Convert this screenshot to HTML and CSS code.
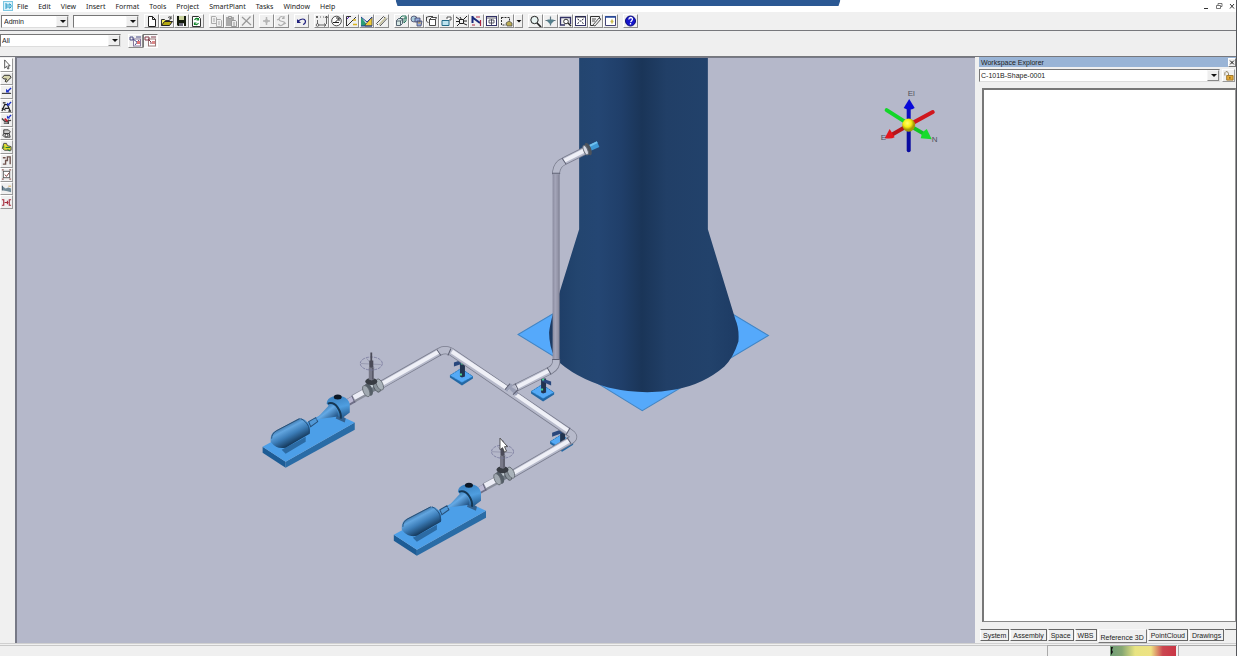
FILE: index.html
```
<!DOCTYPE html>
<html lang="en">
<head>
<meta charset="utf-8">
<title>Smart 3D</title>
<link rel="stylesheet" href="styles.css">
</head>
<body>
<div class="app">
  <div class="session-bar"></div>
  <header class="menubar">
    <svg class="logo" viewBox="0 0 10 10"><rect x=".5" y=".5" width="9" height="9" fill="#d9f1fa" stroke="#7cc7e2"/><path d="M2 3h2v4H2M2 5h2M6 3v4h1l1-1V4L7 3z" fill="none" stroke="#2a9cc8"/></svg>
    <nav class="menus">
      <button>File</button><button>Edit</button><button>View</button><button>Insert</button><button>Format</button><button>Tools</button><button>Project</button><button>SmartPlant</button><button>Tasks</button><button>Window</button><button>Help</button>
    </nav>
    <div class="window-buttons">
      <button aria-label="Minimize"><svg viewBox="0 0 8 8"><path d="M2 6.500h4" stroke="#333"/></svg></button>
      <button aria-label="Restore"><svg viewBox="0 0 8 8"><path d="M3 3V1.500h4v3H6M1.500 3.500h4v3h-4z" fill="none" stroke="#555" stroke-width=".8"/></svg></button>
      <button aria-label="Close"><svg viewBox="0 0 8 8"><path d="M2 2l4 4.500M6 2L2 6.500" stroke="#333"/></svg></button>
    </div>
  </header>

  <div class="toolbar">
    <div class="combos">
      <span class="combo combo-user"><select aria-label="Permission group"><option>Admin</option></select></span>
      <span class="combo combo-blank"><select aria-label="Status"><option></option></select></span>
    </div>
    <div class="group">
      <button aria-label="New"><svg viewBox="0 0 13 12"><path d="M3.500 1.500h4l3 3v7h-7zM7.500 1.500v3h3" fill="#fff" stroke="#222"/></svg></button>
      <button aria-label="Open"><svg viewBox="0 0 13 12"><path d="M1.500 10.500v-6h3l1 1h4v2" fill="#f5ee58" stroke="#333"/><path d="M1.500 10.500l3-4h8l-3 4z" fill="#b5a910" stroke="#222"/><path d="M8 2.500q2-2 3 1M11 1v3H9" fill="none" stroke="#222" stroke-width=".8"/></svg></button>
      <button aria-label="Save"><svg viewBox="0 0 13 12"><path d="M2 1h9v10H3l-1-1z" fill="#141b0c"/><path d="M4 1h5v4H4z" fill="#c8d19b"/><path d="M4 8h5v3H4z" fill="#667"/><path d="M8 8.500h1V11H8z" fill="#fff"/></svg></button>
      <button aria-label="Refresh"><svg viewBox="0 0 13 12"><path d="M2.500 1.500h6l2 2v8h-8z" fill="#fff" stroke="#333"/><path d="M4.500 5q2-3 4-.5M8.500 3v2h-2M8.500 8q-2 3-4 .5M4.500 10V8h2" fill="none" stroke="#12852b" stroke-width="1.200"/></svg></button>
    </div>
    <div class="group">
      <button aria-label="Copy"><svg viewBox="0 0 13 12"><path d="M1.500 1.500h4l1 1v6h-5zM6.500 4.500h4l1 1v6h-5zM3 4h2M3 6h2M8 7h2M8 9h2" fill="none" stroke="#aaa"/></svg></button>
      <button aria-label="Paste"><svg viewBox="0 0 13 12"><path d="M1 2h8v9H1z" fill="#aaa"/><path d="M3.500 1.500h3v2h-3z" fill="#ddd" stroke="#999"/><path d="M6.500 5.500h4l1 1v5h-5zM8 8h2M8 10h2" fill="#eee" stroke="#999"/></svg></button>
      <button aria-label="Delete"><svg viewBox="0 0 13 12"><path d="M2 2l9 8M10.500 1.500L2 10.500" fill="none" stroke="#999" stroke-width="1.200"/></svg></button>
    </div>
    <div class="group">
      <button aria-label="Move"><svg viewBox="0 0 13 12"><path d="M6.500 2v8M3 6h7" fill="none" stroke="#b5b5b5" stroke-width="1.500"/><path d="M6.500 3.500L9 6 6.500 8.500 4 6z" fill="#b5b5b5"/></svg></button>
      <button aria-label="Rotate"><svg viewBox="0 0 13 12"><path d="M9 3Q6 0 4.500 3t3 3.500-1 4Q4 11 3.500 9M9 1v2.500H7M2 5l2-1M9 9l2-1" fill="none" stroke="#b0b0b0" stroke-width="1.200"/></svg></button>
    </div>
    <div class="group">
      <button aria-label="Undo"><svg viewBox="0 0 13 12"><path d="M3 6q6-4 7.500 0Q10.500 9 8 9.500" fill="none" stroke="#22227e" stroke-width="1.200"/><path d="M2 4v4h4z" fill="#22227e"/></svg></button>
    </div>
    <div class="group">
      <button aria-label="Pinpoint"><svg viewBox="0 0 13 12"><path d="M1 1l2 2M3 1L1 3M5 2h1M8 2h1M11.500 1v8M10 3l1.500-2L13 3M2.500 5v5h8M9 8.500l2 1.500-2 1.500" fill="none" stroke="#444" stroke-width=".8"/><circle cx="2.500" cy="10" r="1.300" fill="#fff" stroke="#333" stroke-width=".7"/></svg></button>
      <button aria-label="Point along"><svg viewBox="0 0 13 12"><circle cx="6.500" cy="6" r="4.800" fill="#fff" stroke="#222" stroke-width=".8"/><path d="M3 7.500h6M5 7.500l4-4M6 3h3v3" fill="none" stroke="#222"/></svg></button>
      <button aria-label="Intelligent pen"><svg viewBox="0 0 13 12"><path d="M1.500 11V1.500H6M2 11l9-9" fill="none" stroke="#333"/><path d="M8 5h3M8 9.500h4" stroke="#d8b21b" stroke-width="1.500"/><path d="M2 4l2-2" stroke="#52b"/></svg></button>
      <button aria-label="Measure"><svg viewBox="0 0 13 12"><path d="M1 2l7 9H1z" fill="#2a9c78"/><path d="M5 10l7-8v9H5z" fill="#f0cc36" stroke="#333" stroke-width=".7"/><path d="M1 2l6 5 5-5M1 11h11" fill="none" stroke="#1d3c91"/></svg></button>
      <button aria-label="Ruler"><svg viewBox="0 0 13 12"><path d="M1.500 8.500l7-7M5 11l7-7.500M1.500 8.500L3 10M8.500 1.500L10 3" fill="none" stroke="#555"/><path d="M4 10l7-7.500" stroke="#c5c09a" stroke-width="1.500"/></svg></button>
    </div>
    <div class="group">
      <button aria-label="Workspace"><svg viewBox="0 0 13 12"><path d="M1.500 5.500l2-2h4v5l-2 2h-4zM5.500 10V6l2-2M1.500 6h4" fill="#d7e8e5" stroke="#345" stroke-width=".8"/><path d="M5 3l2-2h4v5l-2 2M9 8V3h3" fill="none" stroke="#26775d"/></svg></button>
      <button aria-label="View style"><svg viewBox="0 0 13 12"><circle cx="4" cy="4" r="3" fill="#acd" stroke="#446" stroke-width=".8"/><path d="M5 3h5v4H5zM7 6h5l-1 5H7z" fill="#8fa8dc" stroke="#446" stroke-width=".8"/><path d="M8 8h3" stroke="#da4"/></svg></button>
      <button aria-label="Clip volume"><svg viewBox="0 0 13 12"><path d="M4.500 4.500h6v6h-6zM4.500 4.500l2-2h5l-1 2M1 2.500l3-1h4M1.500 2v4l2 2" fill="#fff" stroke="#333" stroke-width=".9"/></svg></button>
      <button aria-label="Volume"><svg viewBox="0 0 13 12"><path d="M2 5.500h7v5H2z" fill="#bde3ef" stroke="#246b88"/><path d="M7 4V2h4v3H9" fill="#fff" stroke="#333" stroke-width=".8"/></svg></button>
      <button aria-label="Rotate view"><svg viewBox="0 0 13 12"><path d="M4.500 4.500h4v4h-4zM1 2l3.500 2.500M12 1L8.500 4.500M2 11l2.500-2.500M12 10L8.500 8.500M5 2l1.500 2.500M1 6.500h3.500M8.500 6H12" fill="none" stroke="#222" stroke-width="1"/></svg></button>
      <button aria-label="Fly"><svg viewBox="0 0 13 12"><path d="M2.500 1v7M2 2l8 6" stroke="#18297c" stroke-width="2"/><path d="M6 2h4M10.500 5v6M2 10h3" stroke="#af2440" stroke-width="1.200"/></svg></button>
      <button aria-label="Named views"><svg viewBox="0 0 13 12"><rect x="1.500" y="1.500" width="10" height="9" fill="#fff" stroke="#336"/><path d="M2 3h9M4 5h5v3H4zM6.500 4v6" fill="none" stroke="#334" stroke-width=".8"/></svg></button>
      <button aria-label="Select fence"><svg viewBox="0 0 13 12"><path d="M1.500 2.500h8v6M1.500 2v8H6" fill="none" stroke="#333" stroke-dasharray="2 1"/><path d="M6 8l3-2 3 2v3H7z" fill="#b9aa52" stroke="#444" stroke-width=".7"/></svg></button>
      <button class="narrow" aria-label="More"><svg viewBox="0 0 8 12"><path d="M1.500 5h5L4 7.500z" fill="#111"/></svg></button>
    </div>
    <div class="group">
      <button aria-label="Zoom"><svg viewBox="0 0 13 12"><circle cx="5.500" cy="5" r="3.700" fill="#e8f4f2" stroke="#222"/><path d="M8 8l4 4" stroke="#222" stroke-width="1.700"/></svg></button>
      <button aria-label="Pan"><svg viewBox="0 0 13 12"><path d="M6.500 1.500v9M1.500 5.500h10" fill="none" stroke="#5e7580" stroke-width="1.200"/><path d="M3.500 4.500h6v2L6.500 9.500l-3-3z" fill="#557f8c"/></svg></button>
      <button aria-label="Zoom area"><svg viewBox="0 0 13 12"><path d="M1 2.500h10.500V9M1.500 2v8H6" fill="none" stroke="#336" stroke-width="1.300"/><circle cx="7" cy="6.500" r="2.300" fill="#fff" stroke="#333"/><path d="M9 8l3 3" stroke="#222" stroke-width="1.400"/></svg></button>
      <button aria-label="Fit"><svg viewBox="0 0 13 12"><rect x="1.500" y="1.500" width="10" height="9" fill="#fff" stroke="#336"/><path d="M3.500 4l1.500 1M9.500 4L8 5M3.500 8.500L5 7.500M9.500 8.500L8 7.500M5.500 6h2M2 2h9" fill="none" stroke="#223"/></svg></button>
      <button aria-label="Refresh view"><svg viewBox="0 0 13 12"><path d="M1.500 1.500h9v4M1.500 1.500v9H5" fill="none" stroke="#333"/><path d="M4 10l6-7 2 1-6 7zM3 4h4M3 6h3" fill="#eee" stroke="#555"/></svg></button>
      <button aria-label="Properties"><svg viewBox="0 0 13 12"><path d="M1.500 1.500h10v9h-10z" fill="#fff" stroke="#447"/><path d="M1 2h11" stroke="#224a9c" stroke-width="1.500"/><path d="M8 4.500v4M6.500 6.500h3" stroke="#c9b94b" stroke-width="1.500"/></svg></button>
    </div>
    <div class="group">
      <button aria-label="Help"><svg viewBox="0 0 13 12"><circle cx="6.500" cy="6" r="5" fill="#1515cc" stroke="#0b0b75"/><path d="M4.800 4.500q.2-2 1.900-2 2 .2 1.700 1.900Q7.800 6 6.500 7M6.500 8v1.500" fill="none" stroke="#fff" stroke-width="1.300"/></svg></button>
    </div>
  </div>

  <div class="filterbar">
    <span class="combo combo-filter"><select aria-label="Locate filter"><option>All</option></select></span>
    <div class="group">
      <button aria-label="Inside filter"><svg viewBox="0 0 13 12"><rect x="4.500" y="4" width="7" height="7" fill="#fff" stroke="#86789c"/><path d="M1 2h3v3H1zM4 4l4 3M7 2h5M6 10l4-5" fill="none" stroke="#4a4a86"/><path d="M8 6h3v3H8z" fill="#d77"/></svg></button>
      <button class="pressed" aria-label="Overlapping filter"><svg viewBox="0 0 13 12"><rect x="4.500" y="4" width="7" height="7" fill="#fff" stroke="#977"/><path d="M1 2h4v3H1zM4 4l3 3M7 2h5M6 8h4" fill="none" stroke="#823b4b"/><path d="M8 6h3v3H8z" fill="#d88"/></svg></button>
    </div>
  </div>

  <main class="workarea">
    <div class="side-tools">
      <button class="chosen" aria-label="Select"><svg viewBox="0 0 12 12"><path d="M4 1v9l2-2 1.500 3 1.300-.7L7.500 7.500H10z" fill="#fff" stroke="#222" stroke-width=".8"/></svg></button>
      <button aria-label="Route pipe"><svg viewBox="0 0 12 12"><path d="M1.500 5l2-2.500h6L11 5 8 7.500 6 10 4.500 9 6 6.500H3z" fill="#d8d6b0" stroke="#222"/></svg></button>
      <button aria-label="Insert split"><svg viewBox="0 0 12 12"><path d="M1 7h10" stroke="#444" stroke-width="1.300"/><path d="M9.500 6H5.500V2z" fill="#1c31c8"/><path d="M7 5l4-4" stroke="#1c31c8" stroke-width="1.500"/></svg></button>
      <button aria-label="Insert component"><svg viewBox="0 0 12 12"><path d="M1 11l3-7h3l3 7M2 2h3M4 8h5M8 11h3M1 8l4 2" fill="none" stroke="#222" stroke-width="1.300"/><path d="M10 5H6.500V1.500z" fill="#1c31c8"/><path d="M8 4l3-3" stroke="#1c31c8" stroke-width="1.500"/></svg></button>
      <button aria-label="Insert tap"><svg viewBox="0 0 12 12"><path d="M1 5l3 3 7-1M3 10h5M8 6v5" fill="none" stroke="#444" stroke-width="1.500"/><path d="M4 5l3 3" stroke="#c4202e" stroke-width="2"/><path d="M10 5H6.500V1.500z" fill="#1c31c8"/><path d="M8 4l3-3" stroke="#1c31c8" stroke-width="1.500"/></svg></button>
      <button aria-label="Spool"><svg viewBox="0 0 12 12"><path d="M3 2h5l2 2-1 2 1 4H4L2 8l1-2zM3 6h6" fill="#ccc" stroke="#333"/><circle cx="6" cy="8" r="1.500" fill="#fff" stroke="#333"/></svg></button>
      <button aria-label="Transfer"><svg viewBox="0 0 12 12"><path d="M3 1.500h3l1 2.500 4 1v4H4L1.500 7z" fill="#e1dc32" stroke="#444"/><path d="M5 6h5M3 4v3M7 8l3 2" stroke="#167a35"/></svg></button>
      <button aria-label="Pipe run"><svg viewBox="0 0 12 12"><path d="M2 10h3V6h2V2h3v8M2 3h3" fill="none" stroke="#70544e" stroke-width="1.500"/></svg></button>
      <button aria-label="Check region"><svg viewBox="0 0 12 12"><rect x="2.500" y="2.500" width="7" height="7" fill="#fff" stroke="#555"/><path d="M1 1h2M9 1h2M1 11h2M9 11h2M4 6l2 2 3-4" fill="none" stroke="#7a302c"/></svg></button>
      <button aria-label="Surface"><svg viewBox="0 0 12 12"><path d="M1 3l4 3 3-1 3 1v4L7 9 1 8z" fill="#748c99"/><path d="M8 3.500h3" stroke="#d3a34b"/><path d="M1.500 3v5" stroke="#456"/></svg></button>
      <button aria-label="Connect"><svg viewBox="0 0 12 12"><path d="M1 3h2v6H1M4 6h4M11 3H9v6h2M7 4v4" fill="none" stroke="#a62a3b" stroke-width="1.200"/></svg></button>
    </div>

    <svg class="scene" viewBox="17 58 958 584" preserveAspectRatio="xMidYMid slice" role="img" aria-label="3D model view">
      <defs>
        <linearGradient id="tower" x1="549" x2="738" y1="0" y2="0" gradientUnits="userSpaceOnUse">
          <stop offset="0" stop-color="#1c3a63"/><stop offset=".15" stop-color="#23456f"/><stop offset=".26" stop-color="#244673"/><stop offset=".38" stop-color="#203f6a"/><stop offset=".49" stop-color="#1a3558"/><stop offset=".62" stop-color="#213f67"/><stop offset=".85" stop-color="#22426b"/><stop offset="1" stop-color="#1d3b64"/>
        </linearGradient>
        <linearGradient id="riser" x1="552" x2="560" y1="0" y2="0" gradientUnits="userSpaceOnUse">
          <stop offset="0" stop-color="#85869a"/><stop offset=".4" stop-color="#a4a5b9"/><stop offset=".75" stop-color="#9293a6"/><stop offset="1" stop-color="#6e7084"/>
        </linearGradient>
        <linearGradient id="motor" x1="286" y1="422" x2="296" y2="441" gradientUnits="userSpaceOnUse">
          <stop offset="0" stop-color="#2a5f91"/><stop offset=".3" stop-color="#62a5df"/><stop offset=".6" stop-color="#3c7db8"/><stop offset="1" stop-color="#163b5f"/>
        </linearGradient>
        <linearGradient id="cone" x1="322" y1="407" x2="332" y2="420" gradientUnits="userSpaceOnUse">
          <stop offset="0" stop-color="#3774a9"/><stop offset=".4" stop-color="#65aae6"/><stop offset="1" stop-color="#225486"/>
        </linearGradient>
        <linearGradient id="casing" x1="340" y1="396" x2="346" y2="418" gradientUnits="userSpaceOnUse">
          <stop offset="0" stop-color="#3d85c4"/><stop offset=".45" stop-color="#4f9ee0"/><stop offset="1" stop-color="#1f5284"/>
        </linearGradient>
        <radialGradient id="ball" cx=".4" cy=".35"><stop offset="0" stop-color="#ffff70"/><stop offset=".6" stop-color="#f7ee14"/><stop offset="1" stop-color="#a49a0a"/></radialGradient>
        <g id="support">
          <path d="M-12 0L-1-7 11 1V3L0 10-12 2z" fill="#2468a4"/>
          <path d="M-12 0L-1-7 11 1 0 7z" fill="#55aaf6" stroke="#287bbd" stroke-width=".8" stroke-dasharray="2 1"/>
          <path d="M-2-13h5V1L0 2l-2-1z" fill="#223450"/>
        </g>
        <g id="pump">
          <path d="M263 446v6l23 15v-6z" fill="#1d5c95"/>
          <path d="M286 461v6l69-38v-7z" fill="#2a6ca6"/>
          <path d="M263 446l66-36 26 12-69 39z" fill="#4c9fe8"/>
          <path d="M282 449l17-9 7-4v5l-20 12z" fill="#2c6ba4"/>
          <path d="M338 413l8 5-1 4-9-4z" fill="#34618e"/>
          <path d="M271 441q-1-8 5-11l23-12q7-1 10 6 2 6 1 9l-24 14q-9 2-15-6z" fill="url(#motor)"/>
          <path d="M272 438q0-5 5-8l23-12" fill="none" stroke="#244463" stroke-width=".8"/>
          <path d="M301 418q5 2 8 8 1 4 0 7" fill="none" stroke="#1d4a76" stroke-width=".9"/>
          <path d="M309 421l7-4 2 4-7 5z" fill="#5199d8" stroke="#275079"/>
          <path d="M327 403q0-5 6-7l10 0q6 2 7 8v8l-8 6-6-4z" fill="url(#casing)"/>
          <path d="M328 403q6-2 10 4 4 6 3 11" fill="none" stroke="#153653" stroke-width="2"/>
          <path d="M316 419l14-15q5 0 7 5 2 4 1 7z" fill="url(#cone)"/>
          <ellipse cx="338" cy="396.500" rx="4" ry="2.500" fill="#0b1725"/>
        </g>
        <g id="valve">
          <path d="M348 402l7-4" stroke="#6f6f87" stroke-width="7"/>
          <path d="M348 401l7-4" stroke="#bbb8d2" stroke-width="5"/>
          <path d="M354 398l11-6" stroke="#8a8e9c" stroke-width="8"/>
          <path d="M354 397l11-6" stroke="#ecedf6" stroke-width="5"/>
          <path d="M352 395l3 7" stroke="#64647a"/>
          <path d="M367 390l12-6" stroke="#737c86" stroke-width="8"/>
          <path d="M367 388l12-6" stroke="#c4ced4" stroke-width="3"/>
          <ellipse cx="369" cy="389" rx="3.500" ry="6.500" transform="rotate(-25 369 389)" fill="#555e67"/>
          <ellipse cx="366.500" cy="390.500" rx="3" ry="6" transform="rotate(-25 366.500 390.500)" fill="#a0a8b0" stroke="#5f666e" stroke-width=".8"/>
          <ellipse cx="377" cy="386" rx="3" ry="6" transform="rotate(-25 377 386)" fill="#89929a" stroke="#4f565e" stroke-width=".8"/>
          <ellipse cx="380" cy="384" rx="3" ry="6" transform="rotate(-25 380 384)" fill="#a9b2b9" stroke="#5f666e" stroke-width=".8"/>
          <ellipse cx="371.500" cy="381" rx="6" ry="3.500" fill="#383c43"/>
          <path d="M369 367h5v12l-2 1-3-1z" fill="#777887"/><path d="M373 367v12" stroke="#4d4d5b"/>
          <ellipse cx="371.500" cy="363" rx="11" ry="6.500" fill="none" stroke="#76779b" stroke-width=".8" stroke-dasharray="3 1"/>
          <path d="M361 363l20 1M367 358l8 10" stroke="#85869f" stroke-width=".6"/>
          <path d="M371.500 352v15" stroke="#4b4b58" stroke-width="1.800"/><path d="M371.500 360v7" stroke="#4b4b58" stroke-width="4"/>
        </g>
      </defs>
      <rect x="-500" y="-500" width="3000" height="2000" fill="#b5b8ca"/>
      <path d="M518 334L643 260 768 335 642 410z" fill="#55a9fb" stroke="#4185c5"/>
      <path d="M579 50H707.500V229L735 319Q739 328 738 341 733 357 724 366 703 384 675 389 643 395 608 387 574 377 555 358 549 346 549 332 550 320 560 290L579 229z" fill="url(#tower)"/>

      <g transform="translate(462 375)"><use href="#support"/><path d="M-8-13l9-3v4l-9 3z" fill="#29477c"/></g>
      <g transform="translate(543 391)"><use href="#support"/><path d="M-1-13l9 3v4l-9-4z" fill="#29477c"/></g>
      <g transform="translate(562 441)"><use href="#support"/><path d="M-10-9l11-4v4l-11 4z" fill="#29477c"/></g>
      <path d="M461 363h2M460 374h2M542 379h2M541 389h2M561 430h2" stroke="#4bd897" stroke-width="2"/>

      <path d="M552.500 172h7v190h-7z" fill="url(#riser)"/>
      <g fill="none" stroke-linejoin="round">
        <g stroke="#7a7d8e" stroke-width="8">
          <path d="M556 174V172Q557 164 564 161L586 150"/>
          <path d="M556 359Q557 366 550 370L512 389"/>
          <path d="M382 384L439 351.500Q445 348 451 351L568 431Q577 436 570 440L513 473"/>
        </g>
        <g stroke="#b7bacb" stroke-width="6.500">
          <path d="M556 174V172Q557 164 564 161L586 150"/>
          <path d="M556 359Q557 366 550 370L512 389"/>
          <path d="M382 384L439 351.500Q445 348 451 351L568 431Q577 436 570 440L513 473"/>
        </g>
        <g stroke="#eff0f7" stroke-width="4">
          <path d="M564 160.500L585 150M549 370L516 387M382 383.500L439 351M452 351L509 389M516 394L568 430M569 440L513 472.500"/>
        </g>
        <path d="M508 386l8 5M506 390l6-6M517 394l-6-6" stroke="#9a9fb5" stroke-width="3"/>
        <path d="M505 389l5-6M513 394l5-5M515 383l3 6M437 349l4 6M451 348l-3 7M547 367l4 7M566 434l4-7M567 437l4 6M562 158l4 6M552 173h8M552 359h8" stroke="#5d6073" stroke-width="1"/>
      </g>
      <path d="M589 148l9-4" stroke="#3f99d6" stroke-width="6"/><path d="M589 146l8-4" stroke="#6fc0ee" stroke-width="2"/>
      <ellipse cx="588" cy="149" rx="3" ry="6.500" transform="rotate(-22 588 149)" fill="#4d535c"/>
      <ellipse cx="585.500" cy="150" rx="2" ry="5" transform="rotate(-22 585.500 150)" fill="#d8dae4" stroke="#666c76"/>

      <use href="#valve"/><use href="#pump"/>
      <g transform="translate(131 88)"><use href="#valve"/><use href="#pump"/></g>

      <g stroke-width="4" fill="none" stroke-linecap="round">
        <path d="M886 110L908 124" stroke="#13d629"/><path d="M932 112L908 125" stroke="#d0171d"/>
        <path d="M908 125V150" stroke="#0a0ba0"/><path d="M908 125V108" stroke="#0b0cc0"/>
        <path d="M908 125L892 134" stroke="#b8151b"/><path d="M908 125L922 133" stroke="#11c524"/>
      </g>
      <path d="M908.500 99L914 108q-5 3-11 0z" fill="#0909d8"/>
      <path d="M884 138l5-9 5 8q-3 2-10 1z" fill="#e4151b"/>
      <path d="M931 139l-11-1q1-6 6-9z" fill="#17dc2c"/>
      <circle cx="908" cy="125" r="6.500" fill="url(#ball)"/>
      <g class="axis-label"><text x="907" y="96">El</text><text x="880" y="140">E</text><text x="931" y="142">N</text></g>
      <path d="M500 437.500v11.500l2.500-2 2 4.500 2-1-2-4.500h3z" fill="#fff" stroke="#333" stroke-width=".8"/>
    </svg>

    <aside class="explorer">
      <div class="panel-title"><span>Workspace Explorer</span><button aria-label="Close panel"><svg viewBox="0 0 8 8"><path d="M1.500 1.500l5 5M6.500 1.500l-5 5" stroke="#111" stroke-width="1.300"/></svg></button></div>
      <div class="picker">
        <span class="combo combo-object"><select aria-label="Selected object"><option>C-101B-Shape-0001</option></select></span>
        <button class="lock" aria-label="Lock"><svg viewBox="0 0 12 12"><path d="M2 6V3q1-2 3-1l1 2v2" fill="none" stroke="#8a7b59"/><path d="M4 6h7v5H4z" fill="#e4aa35" stroke="#9c742a"/><path d="M7.500 7.500v2" stroke="#554018"/></svg></button>
      </div>
      <div class="tree"></div>
      <div class="tabs" role="tablist">
        <button role="tab">System</button><button role="tab">Assembly</button><button role="tab">Space</button><button role="tab">WBS</button><button role="tab" class="active" aria-selected="true">Reference 3D</button><button role="tab">PointCloud</button><button role="tab">Drawings</button><span class="tab-rest"></span>
      </div>
    </aside>
  </main>

  <footer class="statusbar">
    <div class="pane message"></div>
    <div class="pane gauge"><div class="scale"><svg viewBox="0 0 4 10"><path d="M1 1h2l-1 3 1 2-2 3z" fill="#111"/></svg></div></div>
    <div class="pane tail"></div>
  </footer>
</div>
</body>
</html>
```
FILE: styles.css
```
* { box-sizing: border-box; }
body { margin: 0; font: 7px/9px "Liberation Sans", Arial, sans-serif; color: #222; background: #f0f0f0; }
button, select { font: inherit; color: inherit; margin: 0; padding: 0; border: 0; background: none; border-radius: 0; }
svg { display: block; flex: none; }

.app { position: relative; display: flex; flex-direction: column; height: 100vh; overflow: hidden; border-right: 1px solid #55565a; }
.session-bar { position: absolute; z-index: 1; top: 0; left: 50%; width: 36%; height: 6px; transform: translateX(-50%); background: #2b5893; clip-path: polygon(0 0, 100% 0, calc(100% - 2px) 100%, 2px 100%); }

.menubar { display: flex; align-items: center; height: 12px; flex: none; padding-left: 3px; background: #fff; font-family: "Noto Sans", sans-serif; }
.logo { width: 10px; height: 10px; margin-right: 4px; }
.menus { display: flex; gap: 10px; flex: 1; }
.window-buttons { display: flex; gap: 5px; }
.window-buttons svg { width: 8px; height: 8px; }

.toolbar { display: flex; align-items: center; gap: 5px; height: 19px; flex: none; padding-left: 1px; border-bottom: 1px solid #77787c; background: #f0f0f0; }
.combos { display: flex; gap: 4px; }
.filterbar { display: flex; align-items: flex-start; gap: 7px; height: 25px; flex: none; padding-top: 3px; background: #efefef; }
.group { display: flex; }
.group button { display: flex; align-items: center; justify-content: center; width: 15px; height: 14px; border: 1px solid; border-color: #fff #8c8c8c #8c8c8c #fff; }
.group svg { width: 13px; height: 12px; }
.group .narrow { width: 9px; }
.group .narrow svg { width: 8px; }
.group .pressed { border-color: #777 #fff #fff #777; background: #f8f8f8; }

.combo { position: relative; display: block; height: 13px; background: #fff; border: 1px solid; border-color: #777 #ddd #ddd #777; }
.combo select { display: block; width: 100%; height: 100%; padding: 0 12px 0 2px; appearance: none; outline: 0; }
.combo::before { content: ""; position: absolute; top: 0; right: 0; bottom: 0; width: 10px; border: 1px solid; border-color: #f6f6f6 #888 #888 #f6f6f6; background: #eee; pointer-events: none; }
.combo::after { content: ""; position: absolute; top: 4px; right: 2px; border: 3px solid transparent; border-top-color: #111; border-bottom: 0; pointer-events: none; }
.combo-user { width: 68px; }
.combo-blank { width: 66px; }
.combo-filter { width: 121px; }
.combo-object { flex: 1; }
.combo-filter select, .combo-object select { padding-left: 1px; }

.workarea { display: flex; flex: 1; min-height: 0; border-top: 1px solid #77787d; }
.side-tools { display: grid; grid-template-rows: repeat(11, 1fr); width: 13px; height: 151px; margin: 1px 2px 0 0; flex: none; }
.side-tools button { display: flex; align-items: center; justify-content: center; min-height: 0; border: 1px solid; border-color: #fff #999 #999 #fff; }
.side-tools svg { width: 11px; height: 11px; }
.side-tools .chosen { background: #fff; }
.scene { flex: 1; min-width: 0; height: 100%; border: solid #777986; border-width: 1px 0 0 2px; background: #b5b8ca; }
.axis-label { font: 8px "Liberation Sans", sans-serif; fill: #50525c; }

.explorer { display: flex; flex-direction: column; flex: none; width: 261px; padding-left: 4px; }
.panel-title { display: flex; align-items: center; justify-content: space-between; height: 10px; padding-left: 2px; background: #99b4d6; }
.panel-title button { width: 8px; height: 9px; background: #eee; border: 1px solid; border-color: #fff #777 #777 #fff; }
.panel-title svg { width: 6px; height: 7px; }
.picker { display: flex; align-items: center; gap: 2px; margin-top: 2px; padding-right: 1px; }
.lock { width: 13px; height: 13px; border: 1px solid; border-color: #fff #999 #999 #fff; }
.lock svg { width: 11px; height: 11px; }
.tree { flex: 1; margin: 6px 0 7px 3px; background: #fff; border: 1px solid #777; border-width: 2px 1px 1px 2px; border-color: #777 #999 #888 #777; }
.tabs { display: flex; height: 14px; padding-left: 1px; }
.tabs button { height: 12px; padding: 0 2px; border: 1px solid #666; border-left-color: #fff; margin-right: 1px; white-space: nowrap; }
.tabs .active { height: 14px; border-color: #f8f8f8 #777 #777 #fff; padding-top: 2px; }
.tab-rest { flex: 1; height: 1px; background: #666; }

.statusbar { display: flex; height: 13px; flex: none; border-top: 1px solid #d0d0d0; background: #f0f0f0; }
.pane { margin-top: 1px; border: solid #aaa; border-width: 1px 0 0 1px; }
.message { flex: 1; border-left: 0; border-top-color: #c8c8c8; }
.gauge { width: 130px; padding-left: 62px; margin-right: 1px; }
.scale { height: 100%; width: 66px; background: linear-gradient(90deg, #6f9d76, #86a773 18%, #e8e482 38%, #eee283 62%, #cb4650 80%, #c93645); }
.scale svg { width: 4px; height: 10px; }
.tail { width: 58px; }
```
